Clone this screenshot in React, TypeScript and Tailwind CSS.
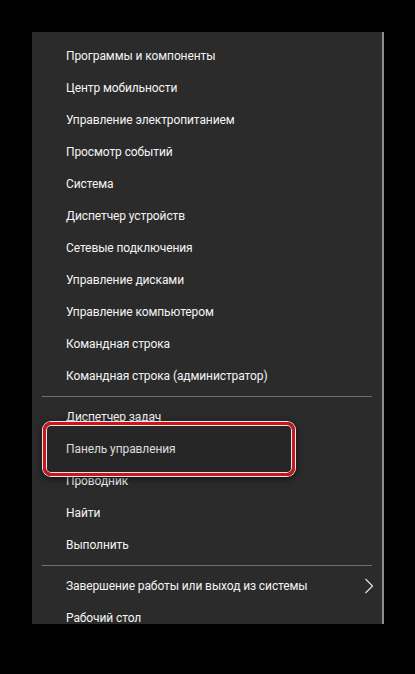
const groups: string[][] = [
  [
    "Программы и компоненты",
    "Центр мобильности",
    "Управление электропитанием",
    "Просмотр событий",
    "Система",
    "Диспетчер устройств",
    "Сетевые подключения",
    "Управление дисками",
    "Управление компьютером",
    "Командная строка",
    "Командная строка (администратор)",
  ],
  ["Диспетчер задач", "Панель управления", "Проводник", "Найти", "Выполнить"],
  ["Завершение работы или выход из системы", "Рабочий стол"],
];

function Chevron() {
  return (
    <svg width="10" height="16" viewBox="0 0 10 16" fill="none" className="text-[#e8e0e0]">
      <path d="M1.5 1 L8.5 8 L1.5 15" stroke="currentColor" strokeWidth="1.2" />
    </svg>
  );
}

export default function App() {
  return (
    <div className="min-h-[674px] bg-black pt-8 pl-8" style={{ fontFamily: 'Roboto, "Noto Sans", sans-serif' }}>
      <div className="relative h-[592px] w-[352px] overflow-hidden border-r-2 border-[#8c8c8c] bg-[#2b2b2b] pt-2">
        {groups.map((group, gi) => (
          <div key={gi}>
            {gi > 0 && <div className="mx-[10px] my-1 h-px bg-[#707070]" />}
            {group.map((label) => (
              <div
                key={label}
                className="flex h-8 items-center justify-between pl-[34px] pr-[8px] text-[12px] leading-none tracking-[-0.1px] text-[#f4f4f4]"
              >
                <span>{label}</span>
                {label.startsWith("Завершение") && <Chevron />}
              </div>
            ))}
          </div>
        ))}
        <div className="absolute left-[11px] top-[390px] h-[54px] w-[252px] rounded-lg border-[3px] border-[#c8161e] bg-black/10 shadow-[0_0_0_1px_#f4e6e6,inset_0_0_0_1px_#f4e6e6,0_2px_8px_rgba(0,0,0,0.7)]" />
      </div>
    </div>
  );
}
